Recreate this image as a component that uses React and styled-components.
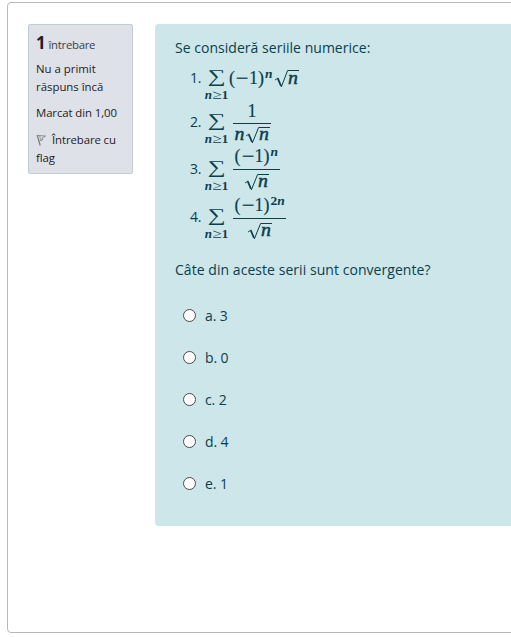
import React from 'react';
import styled, { createGlobalStyle } from 'styled-components';

const GlobalStyle = createGlobalStyle`
  * { box-sizing: border-box; }
  body {
    margin: 0;
    background: #fff;
    overflow: hidden;
    font-family: "Open Sans", "Noto Sans", sans-serif;
  }
`;

const Page = styled.div`
  width: 511px;
  height: 637px;
  padding: 2px 0 0 7px;
  overflow: hidden;
`;

const Card = styled.main`
  display: flex;
  align-items: flex-start;
  gap: 22px;
  width: 540px;
  height: 631px;
  padding: 21px 0 0 20px;
  border: 1px solid #b9b9b9;
  border-radius: 4px;
`;

const Info = styled.aside`
  width: 105px;
  height: 150px;
  flex: none;
  padding: 8px 7px;
  border: 1px solid #c3cbd5;
  border-radius: 2px;
  background: #dee1e7;
  color: #1d2125;
  font-size: 11.4px;
  line-height: 18px;
  white-space: nowrap;
`;

const Heading = styled.h3`
  display: flex;
  align-items: baseline;
  gap: 3px;
  height: 20px;
  margin: 0 0 7px;
  font-size: 11.3px;
  line-height: 20px;
  font-weight: 400;
  color: #3a4047;
  letter-spacing: -0.25px;
`;

const Number = styled.span`
  font-size: 17px;
  font-weight: 700;
  color: #1d2125;
`;

const InfoText = styled.div`
  margin-bottom: ${(p) => p.$gap || 8}px;
  letter-spacing: ${(p) => p.$spacing || '-0.1px'};
`;

const FlagIcon = styled.svg`
  width: 11px;
  height: 12px;
  margin-right: 5px;
  vertical-align: -2px;
`;

const Formulation = styled.section`
  width: 400px;
  height: 502px;
  flex: none;
  padding: 14px 20px;
  border-radius: 4px;
  background: #cde6ea;
  color: #0a3f4c;
`;

const Paragraph = styled.p`
  height: 20px;
  margin: 0;
  font-size: 14px;
  line-height: 20px;
  letter-spacing: ${(p) => p.$spacing};
  white-space: nowrap;
`;

const SeriesList = styled.ol`
  list-style: none;
  height: 202px;
  margin: 0;
  padding: 6px 0 0 15px;
`;

const Item = styled.li`
  display: flex;
  align-items: flex-start;
  height: ${(p) => p.$height}px;
`;

const Marker = styled.span`
  width: 14px;
  margin-top: ${(p) => p.$top}px;
  font-size: 14px;
  line-height: 20px;
  letter-spacing: -0.3px;
`;

const SumBox = styled.span`
  display: flex;
  flex-direction: column;
  align-items: center;
  width: 25px;
  margin-top: ${(p) => p.$top}px;
  font-family: "Liberation Serif", serif;
`;

const Sigma = styled.span`
  height: 23px;
  font-size: 18px;
  line-height: 20px;
  transform: scaleX(1.4);
`;

const Limit = styled.span`
  display: flex;
  font-size: 13px;
  font-weight: 700;
  line-height: 12px;
  white-space: nowrap;
`;

const Relation = styled.span`
  width: 10px;
  text-align: center;
  font-weight: 400;
  transform: scaleX(1.3);
`;

const Line = styled.span`
  display: flex;
  align-items: flex-start;
  height: ${(p) => p.$height || 20}px;
  margin: ${(p) => p.$margin || '0'};
  font-family: "Liberation Serif", serif;
  font-size: 18px;
  line-height: 20px;
  -webkit-text-stroke: 0.2px currentColor;
`;

const Cell = styled.span`
  display: block;
  flex: none;
  width: ${(p) => p.$width}px;
  text-align: center;
`;

const Minus = styled(Cell)`
  transform: scaleX(1.25);
`;

const Variable = styled(Cell)`
  font-style: italic;
  transform: scaleX(1.1);
  -webkit-text-stroke: 0.45px currentColor;
`;

const Exponent = styled.span`
  display: block;
  width: ${(p) => p.$width}px;
  padding-left: 1px;
  font-size: 13.5px;
  font-weight: 700;
  line-height: 11px;
  -webkit-text-stroke: 0;
`;

const Fraction = styled.span`
  display: flex;
  flex-direction: column;
  align-items: center;
  width: ${(p) => p.$width}px;
  margin: ${(p) => p.$top}px 0 0 4px;
`;

const Bar = styled.span`
  width: 100%;
  height: 1px;
  flex: none;
  background: #0a3f4c;
`;

const RootBox = styled.span`
  display: flex;
  width: 25px;
  flex: none;
`;

const Radical = styled.svg`
  width: 25px;
  height: 20px;
  flex: none;
  margin-right: -11px;
`;

const Choices = styled.div`
  display: flex;
  flex-direction: column;
  gap: 22px;
  margin-top: 25px;
  padding-left: 8px;
`;

const Choice = styled.label`
  display: flex;
  align-items: center;
  height: 20px;
  font-size: 14px;
  line-height: 20px;
  letter-spacing: -0.1px;
`;

const ChoiceText = styled.span`
  padding-top: 1px;
`;

const Radio = styled.input`
  appearance: none;
  width: 13px;
  height: 13px;
  margin: 0 9px 0 0;
  border: 1px solid #4b4b4b;
  border-radius: 50%;
  background: #fff;
`;

function Sum({ top }) {
  return (
    <SumBox $top={top}>
      <Sigma>∑</Sigma>
      <Limit><i>n</i><Relation>≥</Relation>1</Limit>
    </SumBox>
  );
}

function Root({ top = 3.5 }) {
  return (
    <RootBox>
      <Radical viewBox="0 0 25 20" fill="none" stroke="currentColor">
        <path d="M1 12 L4 10" strokeWidth="0.9" />
        <path d="M3.7 10.2 L7 18" strokeWidth="1.8" />
        <path d={`M7.3 19 L13.6 ${top} H25`} strokeWidth="1" />
      </Radical>
      <Variable $width={10}>n</Variable>
    </RootBox>
  );
}

function Power({ children, width }) {
  return (
    <>
      <Cell $width={6}>(</Cell>
      <Minus $width={14}>−</Minus>
      <Cell $width={9}>1</Cell>
      <Cell $width={6}>)</Cell>
      <Exponent $width={width}>{children}</Exponent>
    </>
  );
}

const choices = ['a. 3', 'b. 0', 'c. 2', 'd. 4', 'e. 1'];

export default function App() {
  return (
    <Page>
      <GlobalStyle />
      <Card>
        <Info>
          <Heading><Number>1</Number> întrebare</Heading>
          <InfoText $spacing="0px">Nu a primit<br />răspuns încă</InfoText>
          <InfoText $gap={9}>Marcat din 1,00</InfoText>
          <InfoText>
            <FlagIcon viewBox="0 0 11 12" fill="none" stroke="#777">
              <path d="M1.2 1.2 L4.2 11.5" strokeWidth="1.2" />
              <path d="M1.5 1.5 L9.5 2 L6 4.2 L6.5 6 L3.3 6.8" strokeWidth="0.8" />
              <path d="M3.6 2 L4.8 6" strokeWidth="0.6" />
            </FlagIcon>
            Întrebare cu<br />flag
          </InfoText>
        </Info>
        <Formulation>
          <Paragraph $spacing="0.03px">Se consideră seriile numerice:</Paragraph>
          <SeriesList>
            <Item $height={37}>
              <Marker $top={4}>1.</Marker>
              <Sum top={2} />
              <Line $margin="4px 0 0">
                <Power width={10}><i>n</i></Power>
                <Root top={2.5} />
              </Line>
            </Item>
            <Item $height={44}>
              <Marker $top={11}>2.</Marker>
              <Sum top={9} />
              <Fraction $width={38} $top={0}>
                <Line $height={22}><Cell $width={9}>1</Cell></Line>
                <Bar />
                <Line>
                  <Variable $width={11}>n</Variable>
                  <Root />
                </Line>
              </Fraction>
            </Item>
            <Item $height={48}>
              <Marker $top={14}>3.</Marker>
              <Sum top={12} />
              <Fraction $width={47} $top={1}>
                <Line $height={23}><Power width={9}><i>n</i></Power></Line>
                <Bar />
                <Line $margin="1px 0 0"><Root /></Line>
              </Fraction>
            </Item>
            <Item $height={48}>
              <Marker $top={14}>4.</Marker>
              <Sum top={12} />
              <Fraction $width={53} $top={2}>
                <Line $height={23}><Power width={15}>2<i>n</i></Power></Line>
                <Bar />
                <Line $margin="1px 0 0"><Root /></Line>
              </Fraction>
            </Item>
          </SeriesList>
          <Paragraph $spacing="0.05px">Câte din aceste serii sunt convergente?</Paragraph>
          <Choices>
            {choices.map((text) => (
              <Choice key={text}>
                <Radio type="radio" name="answer" />
                <ChoiceText>{text}</ChoiceText>
              </Choice>
            ))}
          </Choices>
        </Formulation>
      </Card>
    </Page>
  );
}
